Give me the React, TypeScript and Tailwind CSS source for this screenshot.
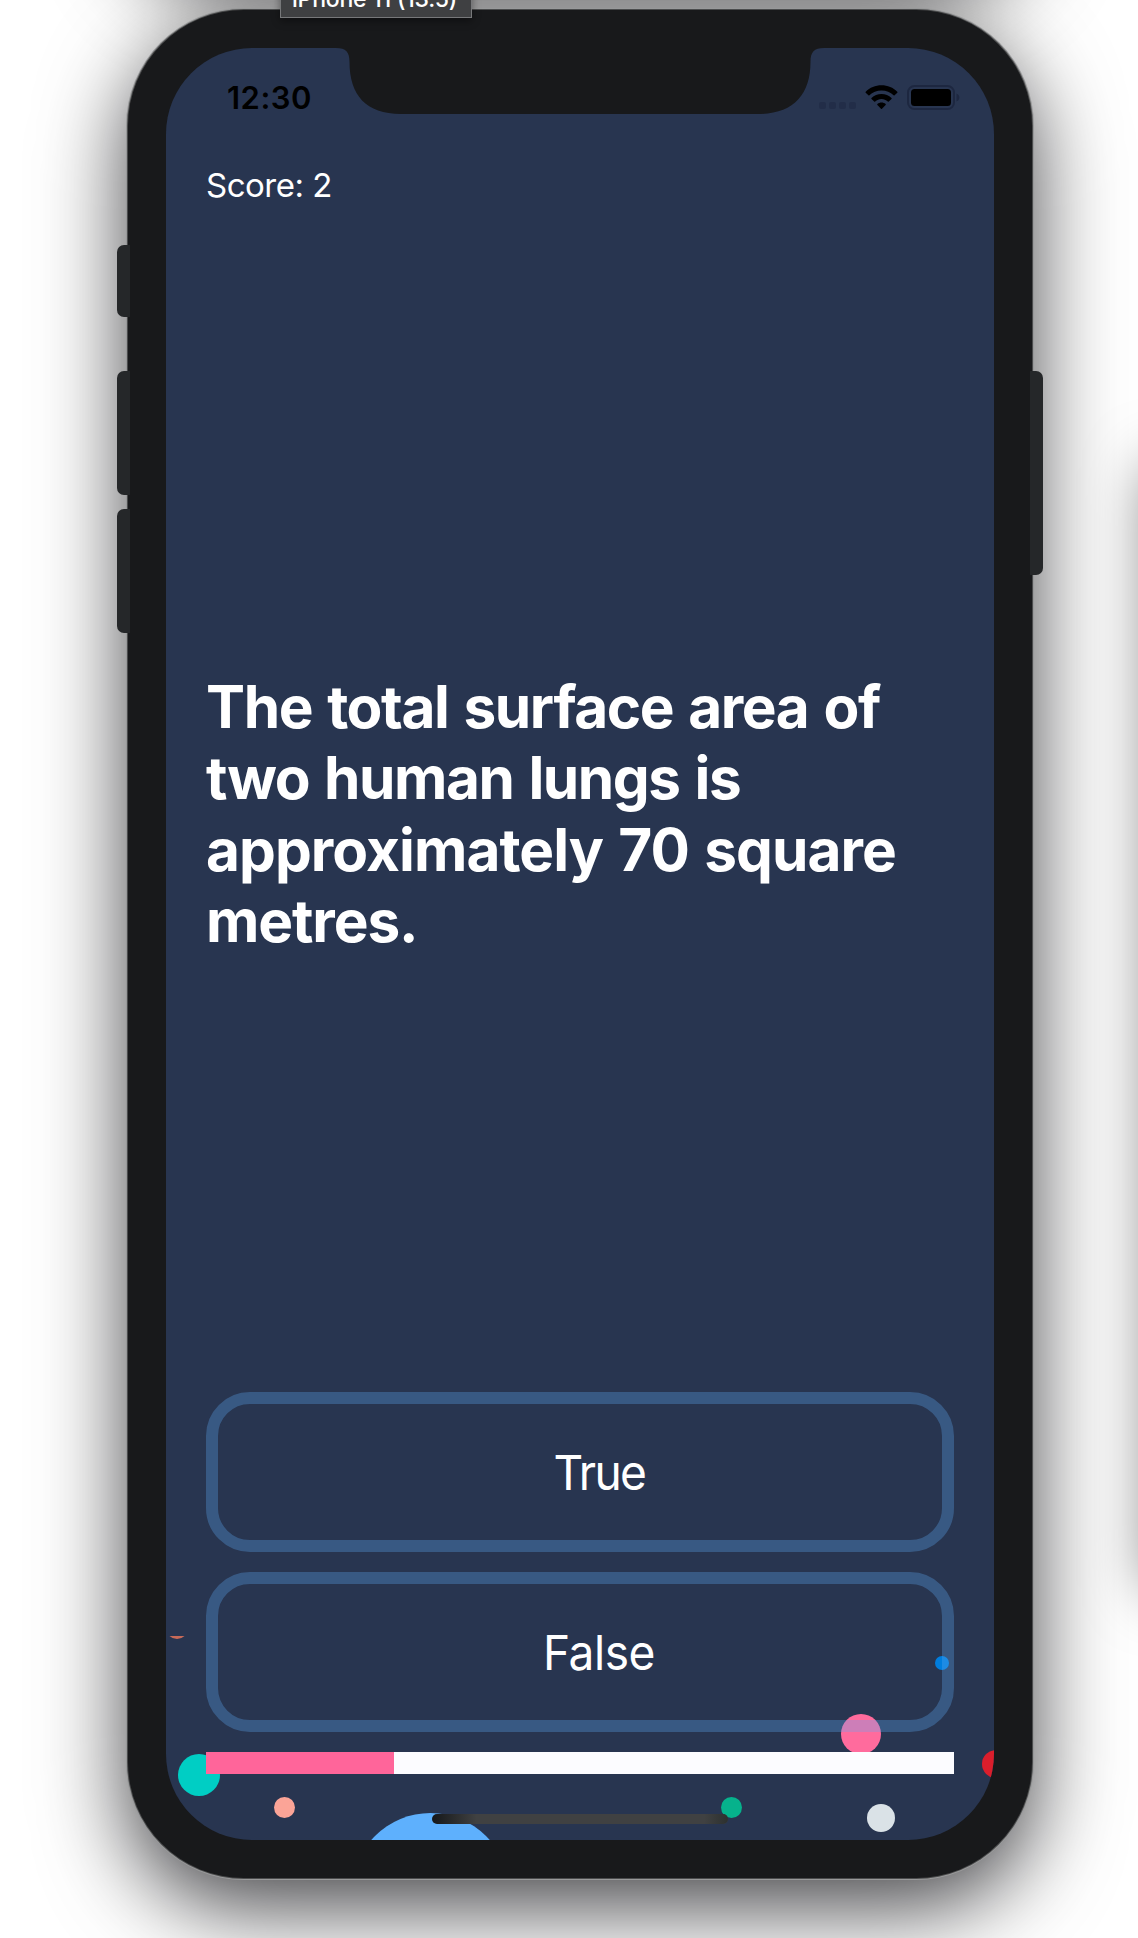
type Ball = { size: string; color: string };

/* Confetti balls scattered behind the quiz controls, in screen coordinates. */
const balls: Ball[] = [
  { size: "left-[12px] top-[1706px] size-[42px]", color: "bg-[#00cec4]" },
  { size: "left-[108px] top-[1749px] size-[21px]", color: "bg-[#fba497]" },
  { size: "left-[186px] top-[1765px] size-[157px]", color: "bg-[#5eb0fd]" },
  { size: "left-[675px] top-[1666px] size-[40px]", color: "bg-[#ff6b9d]" },
  { size: "left-[769px] top-[1608px] size-[14px]", color: "bg-[#007ddd]" },
  { size: "left-[701px] top-[1756px] size-[28px]", color: "bg-[#dae2e7]" },
  { size: "left-[816px] top-[1702px] size-[28px]", color: "bg-[#da1e2c]" },
];

const shadow = "shadow-[0_28px_88px_rgba(0,0,5,0.75)]";

function SideButton({ place }: { place: string }) {
  return <span className={`absolute w-[13px] bg-[#252729] ${place}`} />;
}

function StatusIcons() {
  return (
    <div className="flex h-[26px] items-end">
      <div className="mb-[1px] flex gap-[3px]">
        {[0, 1, 2, 3].map((i) => (
          <span key={i} className="size-[7px] rounded-[2px] bg-[#222d48]" />
        ))}
      </div>
      <svg className="ml-[9px]" width="33" height="25" viewBox="0 0 33 25">
        <path d="M16.5 0.3C22.6 0.3 28.2 2.7 32.3 6.7Q32.8 7.2 32.3 7.7L29.6 10.3Q29.1 10.8 28.6 10.3C25.4 7.2 21.2 5.4 16.5 5.4S7.6 7.2 4.4 10.3Q3.9 10.8 3.4 10.3L0.7 7.7Q0.2 7.2 0.7 6.7C4.8 2.7 10.4 0.3 16.5 0.3Z" />
        <path d="M16.5 9C20.3 9 23.9 10.5 26.5 13Q27 13.5 26.5 14L23.8 16.6Q23.3 17.1 22.8 16.6C21.1 15 18.9 14.1 16.5 14.1S11.9 15 10.2 16.6Q9.7 17.1 9.2 16.6L6.5 14Q6 13.5 6.5 13C9.1 10.5 12.7 9 16.5 9Z" />
        <path d="M16.5 17.6C18 17.6 19.5 18.1 20.6 19.1Q21.1 19.6 20.6 20.1L17 23.7Q16.5 24.2 16 23.7L12.4 20.1Q11.9 19.6 12.4 19.1C13.5 18.1 15 17.6 16.5 17.6Z" />
      </svg>
      <svg className="ml-[9px]" width="54" height="25" viewBox="0 0 54 25">
        <rect x="1" y="1" width="46" height="23" rx="6.5" fill="none" stroke="#1d2740" strokeWidth="2" />
        <rect x="4" y="4" width="40" height="17" rx="3.5" />
        <path d="M49.5 8.4C51.4 9.2 52.4 10.7 52.4 12.5S51.4 15.8 49.5 16.6Z" fill="#1d2740" />
      </svg>
    </div>
  );
}

function Answer({ label, spacing }: { label: string; spacing: string }) {
  return (
    <button
      className={`flex h-40 w-full items-center justify-center rounded-[44px] border-12 border-[rgba(94,170,244,0.31)] pt-[2px] pl-[38px] text-[48.5px] leading-[60px] text-white ${spacing}`}
    >
      <span className="scale-x-95">{label}</span>
    </button>
  );
}

export default function App() {
  return (
    <div className="relative h-[1938px] w-[1138px] overflow-hidden bg-white pt-[10px] pl-[128px] font-[Inter,sans-serif]">
      {/* Neighbouring windows outside the viewport, visible through their shadows */}
      <div className={`absolute -top-[334px] left-[128px] h-[300px] w-[904px] rounded-[116px] ${shadow}`} />
      <div className="absolute top-[445px] left-[1148px] h-[1125px] w-[300px] rounded-[10px] shadow-[0_20px_60px_rgba(0,0,0,0.5)]" />

      <div className={`relative h-[1868px] w-[904px] rounded-[116px] ${shadow}`}>
        <div className="h-full rounded-[116px] bg-[#18191b] px-[38px] pt-[38px] shadow-[0_0_0_1px_#4b4c4d,0_0_0_2px_#98999a]">
          <div className="relative flex h-[1792px] w-[828px] flex-col overflow-hidden rounded-[86px] bg-[#283550] px-10 text-white">
            {balls.map((b) => (
              <span key={b.size} className={`absolute rounded-full ${b.size} ${b.color}`} />
            ))}
            <div className="absolute top-[1588px] left-[2px] h-[4px] w-[18px] overflow-hidden">
              <span className="absolute bottom-[0.8px] left-[-2.5px] size-[22px] rounded-full bg-[#c86a58]" />
            </div>

            {/* Sensor notch */}
            <svg className="absolute top-0 left-[170px]" width="488" height="67" viewBox="0 0 488 67">
              <path
                d="M0 0C10 0 13.5 4 13.5 14C13.5 47 30 66 65 66H422C457 66 474.5 47 474.5 14C474.5 4 478 0 488 0Z"
                fill="#18191b"
              />
            </svg>

            <div className="relative -mr-4 ml-[21px] flex h-[117px] justify-between pt-[30px] text-black">
              <span className="text-[31px] leading-[40px] font-semibold tracking-[0.5px]">12:30</span>
              <div className="mr-[9px] pt-[6px]">
                <StatusIcons />
              </div>
            </div>

            <p className="relative text-[33px] leading-[40px] tracking-[-0.48px]">Score: 2</p>

            <h1 className="relative mt-[466px] text-[58.5px] leading-[71.4px] font-bold whitespace-nowrap">
              <span className="block tracking-[-1.4px] [word-spacing:2.6px]">The total surface area of</span>
              <span className="block tracking-[-1.45px] [word-spacing:2.6px]">two human lungs is</span>
              <span className="block tracking-[-0.95px] [word-spacing:2.4px]">approximately 70 square</span>
              <span className="block tracking-[-1.1px]">metres.</span>
            </h1>

            <div className="relative mt-auto mb-[108px] flex flex-col gap-5">
              <Answer label="True" spacing="tracking-[-1.8px]" />
              <Answer label="False" spacing="tracking-[-0.5px]" />
            </div>

            <div className="absolute top-[1704px] left-10 h-[22px] w-[748px] bg-[#fcfcff]">
              <div className="h-full w-[188px] bg-[#ff659a]" />
            </div>
            <span className="absolute top-[1749px] left-[555px] size-[21px] rounded-full bg-[#06b28c]" />
            <div className="absolute top-[1766px] left-[266px] h-[10px] w-[296px] rounded-full bg-linear-to-r from-[#16181a] via-[#404142] via-15% to-[#404142]">
              <div className="h-full w-full rounded-full bg-linear-to-r from-transparent from-92% to-[#2c302f]" />
            </div>
          </div>
        </div>

        <SideButton place="-left-[11px] top-[235px] h-[72px] rounded-l-[7px]" />
        <SideButton place="-left-[11px] top-[361px] h-[124px] rounded-l-[7px]" />
        <SideButton place="-left-[11px] top-[499px] h-[124px] rounded-l-[7px]" />
        <SideButton place="-right-[11px] top-[361px] h-[204px] rounded-r-[7px]" />
      </div>

      <div className="absolute -top-[18px] left-[280px] h-[36px] w-[192px] border border-[#77787a] bg-[#3f4042] pl-[11px] text-[23px] leading-[32px] font-medium tracking-[-0.2px] whitespace-nowrap text-white shadow-[0_3px_8px_rgba(0,0,0,0.4)]">
        iPhone 11 (13.5)
      </div>
    </div>
  );
}
